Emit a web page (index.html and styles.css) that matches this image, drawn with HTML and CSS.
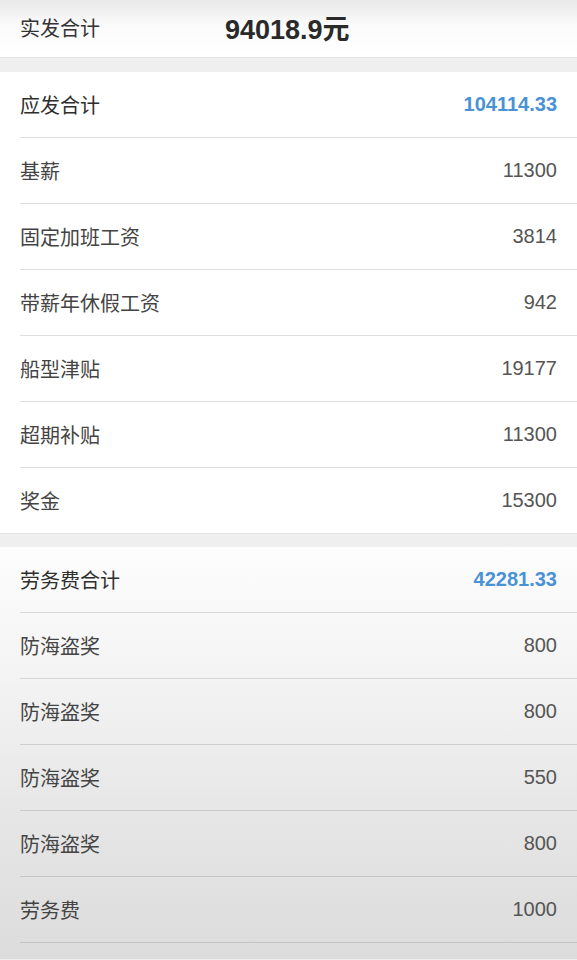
FILE: index.html
```html
<!DOCTYPE html>
<html lang="zh-CN">
<head>
  <meta charset="UTF-8">
  <meta name="viewport" content="width=device-width, initial-scale=1.0">
  <title>工资明细</title>
  <link rel="stylesheet" href="styles.css">
</head>
<body>
  <div class="net-total">
    <span class="net-label">实发合计</span>
    <span class="net-value">94018.9元</span>
  </div>

  <div class="card">
    <div class="row row-head">
      <span class="label">应发合计</span>
      <span class="sum">104114.33</span>
    </div>
    <div class="row"><span class="label">基薪</span><span class="amount">11300</span></div>
    <div class="row"><span class="label">固定加班工资</span><span class="amount">3814</span></div>
    <div class="row"><span class="label">带薪年休假工资</span><span class="amount">942</span></div>
    <div class="row"><span class="label">船型津贴</span><span class="amount">19177</span></div>
    <div class="row"><span class="label">超期补贴</span><span class="amount">11300</span></div>
    <div class="row row-last"><span class="label">奖金</span><span class="amount">15300</span></div>
  </div>

  <div class="card card-shaded">
    <div class="row row-head">
      <span class="label">劳务费合计</span>
      <span class="sum">42281.33</span>
    </div>
    <div class="row"><span class="label">防海盗奖</span><span class="amount">800</span></div>
    <div class="row"><span class="label">防海盗奖</span><span class="amount">800</span></div>
    <div class="row"><span class="label">防海盗奖</span><span class="amount">550</span></div>
    <div class="row"><span class="label">防海盗奖</span><span class="amount">800</span></div>
    <div class="row"><span class="label">劳务费</span><span class="amount">1000</span></div>
  </div>
</body>
</html>
```

FILE: styles.css
```css
body {
  margin: 0;
  font-family: "Liberation Sans", "Noto Sans CJK SC", sans-serif;
  background: #efefef;
  color: #333;
}

.net-total {
  display: flex;
  align-items: center;
  height: 54px;
  padding: 0 20px 3px;
  background: linear-gradient(180deg, #e9e9e9, #fbfbfb 45%, #ffffff);
  border-bottom: 1px solid #e3e3e3;
}

.net-label {
  width: 205px;
  font-size: 20px;
  color: #333;
}

.net-value {
  font-size: 27px;
  font-weight: bold;
  color: #2a2a2a;
}

.card {
  margin-top: 14px;
  padding-left: 20px;
  background: #fff;
  border-bottom: 1px solid #e4e4e4;
}

.card-shaded {
  margin-top: 13px;
  padding-bottom: 16px;
  border-bottom: none;
  background: linear-gradient(180deg, #fdfdfd 0%, #f4f4f4 30%, #e6e6e6 65%, #dcdcdc 100%);
}

.row {
  display: flex;
  justify-content: space-between;
  align-items: center;
  height: 65px;
  padding-right: 20px;
  border-bottom: 1px solid #dedede;
}

.card-shaded .row {
  border-bottom-color: rgba(0, 0, 0, 0.12);
}

.row-last {
  border-bottom: none;
}

.label {
  font-size: 20px;
  color: #444;
}

.row-head .label {
  color: #2e2e2e;
}

.amount {
  font-size: 20px;
  color: #555;
}

.sum {
  font-size: 20px;
  font-weight: bold;
  color: #4a92d6;
}
```
